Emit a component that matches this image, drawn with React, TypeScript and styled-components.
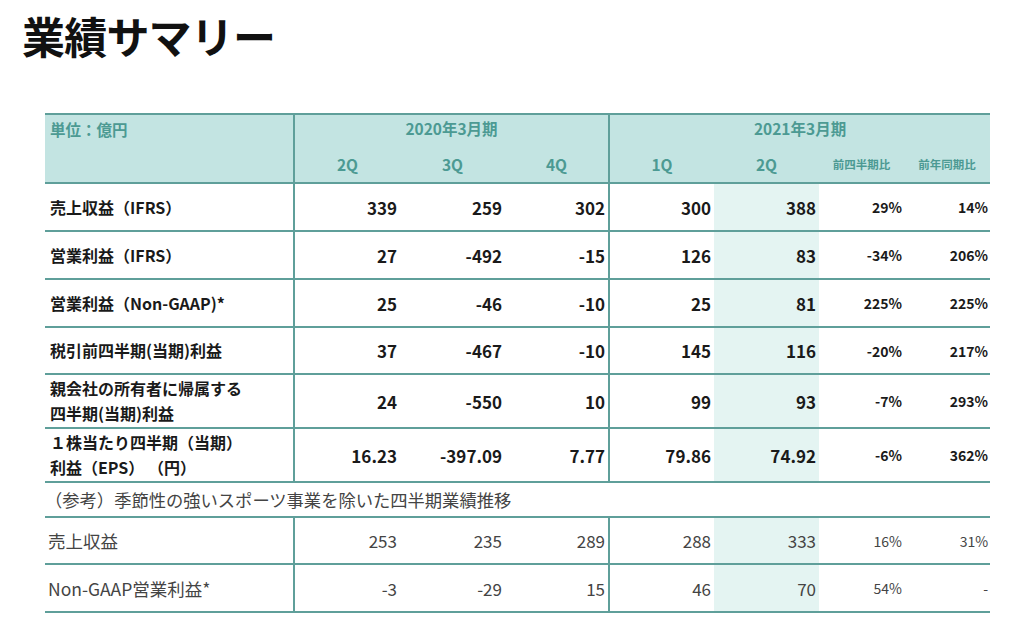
import React from "react";
import styled, { createGlobalStyle } from "styled-components";

const Global = createGlobalStyle`
  html, body { margin: 0; padding: 0; background: #ffffff; }
  body { font-family: "Noto Sans CJK JP", "Noto Sans", sans-serif; color: #1a1a1a; }
`;

const LINE = "#5f9f9a";
const HEAD_BG = "#c3e4e2";
const HEAD_TEXT = "#4c9a93";
const HILITE = "#e4f4f2";

const Page = styled.div`
  width: 1024px;
  height: 629px;
  overflow: hidden;
`;

const Title = styled.h1`
  margin: 0;
  padding: 14px 0 0 22px;
  font-size: 43px;
  line-height: 43px;
  font-weight: 700;
  letter-spacing: -0.8px;
  color: #111;
`;

const Table = styled.table`
  margin: 56px 0 0 45px;
  width: 945px;
  border-collapse: collapse;
  table-layout: fixed;
`;

const HeadRow = styled.tr<{ $h: number }>`
  height: ${(p) => p.$h}px;
  background: ${HEAD_BG};
`;

const HeadCell = styled.th<{ $div?: boolean; $small?: boolean; $left?: boolean; $top?: boolean; $bottom?: boolean }>`
  padding: ${(p) => (p.$left ? "3px 0 0 5px" : p.$top ? "0 0 5px 0" : "0")};
  text-align: ${(p) => (p.$left ? "left" : "center")};
  vertical-align: ${(p) => (p.$left ? "top" : "middle")};
  font-size: ${(p) => (p.$small ? "11.5px" : "15.5px")};
  font-weight: 700;
  color: ${HEAD_TEXT};
  border-top: ${(p) => (p.$top ? `2px solid ${LINE}` : "none")};
  border-bottom: ${(p) => (p.$bottom ? `2px solid ${LINE}` : "none")};
  border-right: ${(p) => (p.$div ? `2px solid ${LINE}` : "none")};
  white-space: nowrap;
`;

const BodyRow = styled.tr<{ $h: number }>`
  height: ${(p) => p.$h}px;
`;

const Label = styled.td<{ $bold?: boolean }>`
  padding: 0 0 0 ${(p) => (p.$bold ? "5px" : "3px")};
  text-align: left;
  vertical-align: middle;
  font-size: ${(p) => (p.$bold ? "16px" : "17.5px")};
  line-height: 25px;
  font-weight: ${(p) => (p.$bold ? 700 : 400)};
  color: ${(p) => (p.$bold ? "#1a1a1a" : "#444")};
  border-bottom: 2px solid ${LINE};
  border-right: 2px solid ${LINE};
  white-space: nowrap;
`;

const Num = styled.td<{ $bold?: boolean; $div?: boolean; $hi?: boolean; $pct?: boolean }>`
  padding: 0 ${(p) => (p.$pct ? "2px" : "3px")} 0 0;
  text-align: right;
  vertical-align: middle;
  font-size: ${(p) => (p.$pct ? "14px" : "17px")};
  font-weight: ${(p) => (p.$bold ? 700 : 400)};
  color: ${(p) => (p.$bold ? "#1a1a1a" : "#444")};
  background: ${(p) => (p.$hi ? HILITE : "transparent")};
  border-bottom: 2px solid ${LINE};
  border-right: ${(p) => (p.$div ? `2px solid ${LINE}` : "none")};
  white-space: nowrap;
`;

const Caption = styled.td`
  padding: 0;
  font-size: 17.3px;
  font-weight: 400;
  color: #444;
  vertical-align: middle;
  border-bottom: 2px solid ${LINE};
  white-space: nowrap;
`;

type Row = { label: React.ReactNode; vals: string[]; h: number };

const main: Row[] = [
  { label: "売上収益（IFRS）", vals: ["339", "259", "302", "300", "388", "29%", "14%"], h: 48 },
  { label: "営業利益（IFRS）", vals: ["27", "-492", "-15", "126", "83", "-34%", "206%"], h: 48 },
  { label: "営業利益（Non-GAAP)*", vals: ["25", "-46", "-10", "25", "81", "225%", "225%"], h: 48 },
  { label: "税引前四半期(当期)利益", vals: ["37", "-467", "-10", "145", "116", "-20%", "217%"], h: 47 },
  {
    label: (
      <>
        親会社の所有者に帰属する
        <br />
        四半期(当期)利益
      </>
    ),
    vals: ["24", "-550", "10", "99", "93", "-7%", "293%"],
    h: 54,
  },
  {
    label: (
      <>
        １株当たり四半期（当期）
        <br />
        利益（EPS） （円）
      </>
    ),
    vals: ["16.23", "-397.09", "7.77", "79.86", "74.92", "-6%", "362%"],
    h: 54,
  },
];

const ref: Row[] = [
  { label: "売上収益", vals: ["253", "235", "289", "288", "333", "16%", "31%"], h: 47 },
  { label: "Non-GAAP営業利益*", vals: ["-3", "-29", "15", "46", "70", "54%", "-"], h: 48 },
];

const widths = [249, 106, 105, 104, 105, 105, 85, 86];

function renderRow(r: Row, bold: boolean, i: number) {
  return (
    <BodyRow $h={r.h} key={i}>
      <Label $bold={bold}>{r.label}</Label>
      {r.vals.map((v, j) => (
        <Num key={j} $bold={bold} $div={j === 2} $hi={j === 4} $pct={j >= 5}>
          {v}
        </Num>
      ))}
    </BodyRow>
  );
}

export default function App() {
  return (
    <Page>
      <Global />
      <Title>業績サマリー</Title>
      <Table>
        <colgroup>
          {widths.map((w, i) => (
            <col key={i} style={{ width: w }} />
          ))}
        </colgroup>
        <thead>
          <HeadRow $h={31}>
            <HeadCell rowSpan={2} $left $div $top $bottom>
              単位：億円
            </HeadCell>
            <HeadCell colSpan={3} $div $top>
              2020年3月期
            </HeadCell>
            <HeadCell colSpan={4} $top>
              2021年3月期
            </HeadCell>
          </HeadRow>
          <HeadRow $h={38}>
            <HeadCell $bottom>2Q</HeadCell>
            <HeadCell $bottom>3Q</HeadCell>
            <HeadCell $bottom $div>4Q</HeadCell>
            <HeadCell $bottom>1Q</HeadCell>
            <HeadCell $bottom>2Q</HeadCell>
            <HeadCell $bottom $small>前四半期比</HeadCell>
            <HeadCell $bottom $small>前年同期比</HeadCell>
          </HeadRow>
        </thead>
        <tbody>
          {main.map((r, i) => renderRow(r, true, i))}
          <BodyRow $h={35}>
            <Caption colSpan={8}>（参考）季節性の強いスポーツ事業を除いた四半期業績推移</Caption>
          </BodyRow>
          {ref.map((r, i) => renderRow(r, false, 100 + i))}
        </tbody>
      </Table>
    </Page>
  );
}
